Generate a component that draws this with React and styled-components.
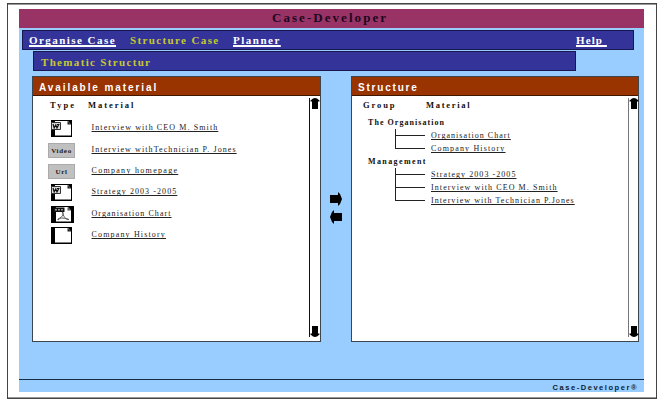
import React from 'react';
import styled, {createGlobalStyle} from 'styled-components';

const SERIF = '"Liberation Serif", "Times New Roman", serif';
const SANS = '"Liberation Sans", Arial, sans-serif';

const GlobalStyle = createGlobalStyle`
  * {
    box-sizing: border-box;
  }

  body {
    margin: 0;
    background: #fff;
    font-family: ${SERIF};
  }
`;

const Page = styled.div`
  width: 658px;
  height: 404px;
  padding: 3px 1px 5px 7px;
  overflow: hidden;
`;

const Frame = styled.div`
  width: 650px;
  height: 396px;
  padding: 5px 12px 4px 11px;
  border: 1px solid #444;
  box-shadow: inset 0 1px 0 #999, inset 0 -1px 0 #999;
`;

const Window = styled.div`
  display: flex;
  flex-direction: column;
  width: 625px;
  height: 383px;
  background: #99ccff;
`;

const TitleBar = styled.h1`
  flex: none;
  height: 19px;
  margin: 0 0 2px;
  padding-left: 253px;
  background: #993366;
  color: #1c0820;
  font-size: 13px;
  line-height: 18px;
  letter-spacing: 2.05px;
`;

const Bar = styled.nav`
  display: flex;
  flex: none;
  border: 1px solid #181850;
  background: #333399;
  font-size: 11px;
  font-weight: bold;
`;

const MenuBar = styled(Bar)`
  width: 612px;
  height: 20px;
  margin: 0 0 1px 3px;
  padding-left: 6px;
  line-height: 19px;
`;

const SubMenuBar = styled(Bar)`
  width: 543px;
  height: 20px;
  margin: 0 0 5px 14px;
  padding-left: 7px;
  line-height: 20px;
  color: #c8c832;
  letter-spacing: 1.33px;
`;

const MenuItem = styled.a`
  flex: none;
  width: ${p => p.$width}px;
  color: ${p => (p.$active ? '#c8c832' : '#fff')};
  letter-spacing: ${p => p.$spacing}px;
  white-space: pre;
  text-decoration: ${p => (p.$active ? 'none' : 'underline')};
  text-decoration-thickness: 2px;
  text-decoration-skip-ink: none;
  text-underline-offset: 1px;
`;

const Workspace = styled.main`
  display: flex;
  height: 266px;
  padding-left: 13px;
`;

const Panel = styled.section`
  display: flex;
  flex-direction: column;
  flex: none;
  width: ${p => p.$width}px;
  height: 266px;
  border: 1px solid #3c4650;
  background: #fff;
  color: #111;
`;

const PanelHeader = styled.h2`
  flex: none;
  height: 19px;
  margin: 0;
  padding-left: 6px;
  border-bottom: 1px solid #401800;
  background: #993300;
  color: #fff;
  font: bold 10px/21px ${SANS};
  letter-spacing: ${p => p.$spacing}px;
`;

const PanelBody = styled.div`
  display: flex;
  flex: 1;
`;

const PanelContent = styled.div`
  flex: 1;
`;

const Columns = styled.div`
  display: flex;
  height: 19px;
  padding: 4px 0 0 ${p => p.$inset}px;
  font-size: 8.5px;
  font-weight: bold;
  line-height: 10px;
`;

const ColumnName = styled.span`
  width: ${p => p.$width}px;
  letter-spacing: ${p => p.$spacing}px;
`;

const Scrollbar = styled.div`
  display: flex;
  flex-direction: column;
  justify-content: space-between;
  align-items: center;
  width: ${p => (p.$soft ? 10 : 11)}px;
  height: 239px;
  margin-top: 2px;
  border-left: 1px solid ${p => (p.$soft ? '#777' : '#111')};

  svg {
    flex: none;
  }
`;

const Link = styled.a`
  color: #222;
  font-size: 8px;
  line-height: 13px;
  letter-spacing: ${p => p.$spacing}px;
  white-space: pre;
  text-decoration: underline;
  text-decoration-thickness: 1px;
  text-decoration-skip-ink: none;
  text-underline-offset: 1px;
`;

const MaterialList = styled.ul`
  margin: 3px 0 0;
  padding: 0 0 0 15px;
  list-style: none;
`;

const MaterialRow = styled.li`
  display: flex;
  align-items: center;
  height: 21.4px;

  ${Link} {
    margin-bottom: 2px;
  }
`;

const TypeCell = styled.div`
  display: flex;
  width: 43.5px;
  padding-left: ${p => (p.$badge ? 0 : 3)}px;

  svg {
    display: block;
  }
`;

const Badge = styled.span`
  width: 27px;
  height: 15px;
  border: 1px solid #aaa;
  background: #c0c0c0;
  color: #222;
  font-size: 7px;
  font-weight: bold;
  line-height: 14px;
  letter-spacing: 0.7px;
  text-align: center;
`;

const Transfer = styled.div`
  display: flex;
  flex-direction: column;
  align-items: center;
  gap: 4px;
  width: 30px;
  padding-top: 116px;
`;

const Group = styled.div`
  height: ${p => p.$height}px;
  padding-left: 16px;
`;

const GroupName = styled.h3`
  height: 14px;
  margin: 0;
  font-size: 8px;
  line-height: 15px;
  letter-spacing: ${p => p.$spacing}px;
`;

const Leaf = styled.div`
  display: flex;
  align-items: flex-end;
  height: 13px;
  padding-left: 27px;

  &:first-of-type {
    height: 7px;
  }

  ${Link} {
    margin-bottom: -6px;
  }
`;

const Branch = styled.span`
  width: 30px;
  height: 100%;
  margin-right: 6px;
  border: solid #222;
  border-width: 0 0 1px 1px;
`;

const Footer = styled.footer`
  height: 13px;
  margin-top: auto;
  padding-right: 6px;
  border-top: 1px solid #152c48;
  color: #0c1c30;
  font: bold 7.5px/15px ${SANS};
  letter-spacing: 1.55px;
  text-align: right;
`;

const ScrollArrow = ({down}) => (
  <svg width="10" height="11" viewBox="0 0 10 11">
    <path
      d="M5 0 L7 0.5 L9.5 2.5 V3.5 H8 V11 H2 V3.5 H0.5 V2.5 L3 0.5 Z"
      transform={down ? 'rotate(180 5 5.5)' : undefined}
    />
  </svg>
);

const MoveArrow = ({left}) => (
  <svg width="12" height="14" viewBox="0 0 12 14">
    <path d="M0 3 H8 V0 L10 2 L12 7 L10 12 L8 14 V11 H0 Z" transform={left ? 'rotate(180 6 7)' : undefined} />
  </svg>
);

const PageIcon = ({word}) => (
  <svg width="21" height="17" viewBox="0 0 21 17">
    <rect width="21" height="17" />
    <path d="M4 1 H17 L20 4.5 V15.5 H4 Z" fill="#fff" />
    <path d="M16.5 1 V4.5 H20" fill="#222" />
    {word && (
      <g>
        <path d="M0.5 2.5 H9.5 V9.5 H0.5 Z" fill="#ddd" stroke="#333" />
        <path d="M2 4 L3.2 8 L4.8 5 L6 8 L8 4 M6 4.5 H8.5" fill="none" stroke="#111" strokeWidth="1.2" />
      </g>
    )}
  </svg>
);

const PdfIcon = () => (
  <svg width="23" height="17" viewBox="0 0 23 17">
    <rect width="23" height="17" />
    <path d="M5 1 H17 L20 4.5 V15.5 H5 Z" fill="#fff" />
    <path d="M16.5 1 V4.5 H20" fill="#555" />
    <rect x="2.5" y="1.5" width="11" height="4.5" fill="#111" />
    <path d="M4 3.8 H12.5" stroke="#999" strokeWidth="1.6" strokeDasharray="2 1" />
    <path d="M11.5 6 C13 8 12 10 7 14 C6 12 11 11 18 13.5 C15 14 12 10 11.5 6" fill="none" stroke="#555" />
  </svg>
);

const materials = [
  {type: 'word', name: 'Interview with CEO M. Smith', spacing: 1.1},
  {type: 'Video', name: 'Interview withTechnician P. Jones', spacing: 1.09},
  {type: 'Url', name: 'Company homepage', spacing: 1.3},
  {type: 'word', name: 'Strategy 2003 -2005', spacing: 1.08},
  {type: 'pdf', name: 'Organisation Chart', spacing: 1.06},
  {type: 'page', name: 'Company History', spacing: 1.16}
];

const groups = [
  {
    name: 'The Organisation',
    spacing: 1.05,
    height: 39,
    items: [
      {name: 'Organisation Chart', spacing: 1.05},
      {name: 'Company History', spacing: 1.16}
    ]
  },
  {
    name: 'Management',
    spacing: 1.4,
    height: 52,
    items: [
      {name: 'Strategy 2003 -2005', spacing: 1.06},
      {name: 'Interview with CEO M. Smith', spacing: 1.09},
      {name: 'Interview with Technician P.Jones', spacing: 1.05}
    ]
  }
];

const TypeIcon = ({type}) => {
  if (type === 'pdf') return <PdfIcon />;
  if (type === 'word' || type === 'page') return <PageIcon word={type === 'word'} />;
  return <Badge>{type}</Badge>;
};

const AvailableMaterial = () => (
  <Panel $width={289}>
    <PanelHeader $spacing={1.92}>Available material</PanelHeader>
    <PanelBody>
      <PanelContent>
        <Columns $inset={17}>
          <ColumnName $width={38} $spacing={2.1}>Type</ColumnName>
          <ColumnName $width={80} $spacing={1.95}>Material</ColumnName>
        </Columns>
        <MaterialList>
          {materials.map(m => (
            <MaterialRow key={m.name}>
              <TypeCell $badge={m.type === 'Video' || m.type === 'Url'}>
                <TypeIcon type={m.type} />
              </TypeCell>
              <Link $spacing={m.spacing}>{m.name}</Link>
            </MaterialRow>
          ))}
        </MaterialList>
      </PanelContent>
      <Scrollbar>
        <ScrollArrow />
        <ScrollArrow down />
      </Scrollbar>
    </PanelBody>
  </Panel>
);

const Structure = () => (
  <Panel $width={288}>
    <PanelHeader $spacing={1.8}>Structure</PanelHeader>
    <PanelBody>
      <PanelContent>
        <Columns $inset={11}>
          <ColumnName $width={63} $spacing={1.9}>Group</ColumnName>
          <ColumnName $width={80} $spacing={1.7}>Material</ColumnName>
        </Columns>
        {groups.map(g => (
          <Group key={g.name} $height={g.height}>
            <GroupName $spacing={g.spacing}>{g.name}</GroupName>
            {g.items.map(item => (
              <Leaf key={item.name}>
                <Branch />
                <Link $spacing={item.spacing}>{item.name}</Link>
              </Leaf>
            ))}
          </Group>
        ))}
      </PanelContent>
      <Scrollbar $soft>
        <ScrollArrow />
        <ScrollArrow down />
      </Scrollbar>
    </PanelBody>
  </Panel>
);

export default function App() {
  return (
    <Page>
      <GlobalStyle />
      <Frame>
        <Window>
          <TitleBar>Case-Developer</TitleBar>
          <MenuBar>
            <MenuItem $width={101} $spacing={1.45}>Organise Case</MenuItem>
            <MenuItem $width={103} $spacing={1.37} $active>Structure Case</MenuItem>
            <MenuItem $width={343} $spacing={1.5}>Planner</MenuItem>
            <MenuItem $width={40} $spacing={1.1}>{'Help\u00a0'}</MenuItem>
          </MenuBar>
          <SubMenuBar>Thematic Structur</SubMenuBar>
          <Workspace>
            <AvailableMaterial />
            <Transfer>
              <MoveArrow />
              <MoveArrow left />
            </Transfer>
            <Structure />
          </Workspace>
          <Footer>Case-Developer®</Footer>
        </Window>
      </Frame>
    </Page>
  );
}
